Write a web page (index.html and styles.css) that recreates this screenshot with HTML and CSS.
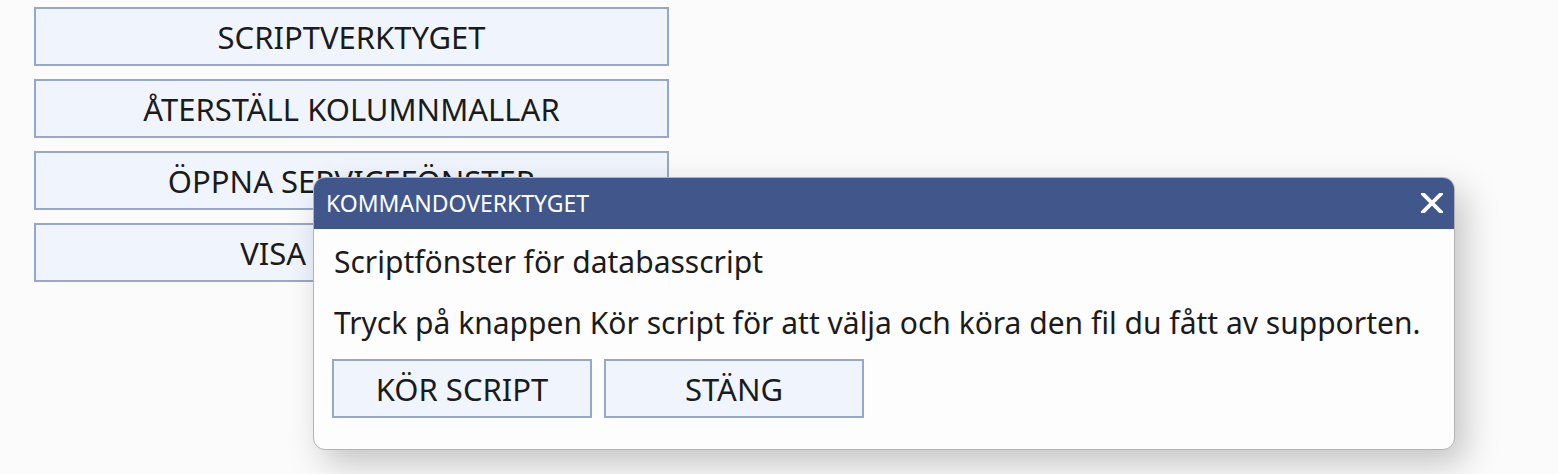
FILE: index.html
```html
<!DOCTYPE html>
<html>

<head>
  <title>Kommandoverktyget</title>
  <link rel="stylesheet" href="styles.css">
</head>

<body>
  <div class="tool-list">
    <button class="tool-button">SCRIPTVERKTYGET</button>
    <button class="tool-button">ÅTERSTÄLL KOLUMNMALLAR</button>
    <button class="tool-button">ÖPPNA SERVICEFÖNSTER</button>
    <button class="tool-button">VISA LOGGBOK</button>
  </div>

  <div class="dialog">
    <div class="dialog-header">
      <span class="dialog-title">KOMMANDOVERKTYGET</span>
      <button class="dialog-close" aria-label="Stäng">
        <svg width="22" height="20" viewBox="0 0 22 20">
          <path d="M2 1 L20 19 M20 1 L2 19" stroke="#fff" stroke-width="3.8" stroke-linecap="square" />
        </svg>
      </button>
    </div>
    <div class="dialog-body">
      <p class="dialog-lead">Scriptfönster för databasscript</p>
      <p class="dialog-text">Tryck på knappen Kör script för att välja och köra den fil du fått av supporten.</p>
      <div class="dialog-actions">
        <button class="tool-button small">KÖR SCRIPT</button>
        <button class="tool-button small">STÄNG</button>
      </div>
    </div>
  </div>
</body>

</html>
```

FILE: styles.css
```css
:root {
  --header: #41578c;
  --btn-bg: #f0f5fd;
  --btn-border: #94a8cd;
  --text: #1b1b1b;
}

* {
  box-sizing: border-box;
  margin: 0;
  padding: 0;
}

body {
  font-family: 'Noto Sans', 'Open Sans', sans-serif;
  background: #fbfbfc;
  color: var(--text);
  width: 1558px;
  height: 474px;
  overflow: hidden;
  position: relative;
}

.tool-list {
  display: flex;
  flex-direction: column;
  gap: 13px;
  padding: 7px 0 0 34px;
  width: 669px;
}

.tool-button {
  height: 59px;
  border: 2px solid var(--btn-border);
  background: var(--btn-bg);
  color: var(--text);
  font-family: inherit;
  font-size: 31px;
  cursor: pointer;
}

.tool-button.small {
  width: 260px;
  flex: none;
}

.dialog {
  position: absolute;
  left: 313px;
  top: 177px;
  width: 1142px;
  height: 273px;
  background: #fdfdfd;
  border: 1.5px solid #b3b3b3;
  border-radius: 12px;
  overflow: hidden;
  box-shadow: 10px 14px 34px rgba(0, 0, 0, 0.22);
}

.dialog-header {
  display: flex;
  align-items: center;
  justify-content: space-between;
  height: 51px;
  padding: 0 11px 2px 12px;
  background: var(--header);
  color: #fff;
}

.dialog-title {
  font-size: 23px;
}

.dialog-close {
  display: flex;
  border: none;
  background: none;
  cursor: pointer;
}

.dialog-body {
  padding: 16px 18px 0 18px;
}

.dialog-lead,
.dialog-text {
  font-size: 30px;
  line-height: 34px;
  padding-left: 2px;
}

.dialog-text {
  margin-top: 27px;
}

.dialog-actions {
  display: flex;
  gap: 12px;
  margin-top: 19px;
}
```
